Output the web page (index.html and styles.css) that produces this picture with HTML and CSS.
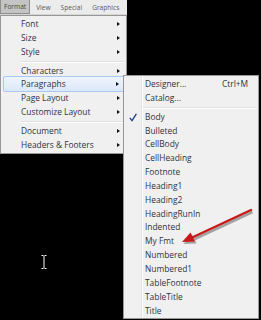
FILE: index.html
```html
<!DOCTYPE html>
<html>
<head>
<meta charset="utf-8">
<link rel="stylesheet" href="styles.css">
</head>
<body>
<div class="screen">
  <div class="menubar">
    <span class="tab tab-active">Format</span>
    <span class="tab">View</span>
    <span class="tab">Special</span>
    <span class="tab">Graphics</span>
  </div>
  <div class="menu main">
    <div class="item sub">Font</div>
    <div class="item sub">Size</div>
    <div class="item sub">Style</div>
    <div class="sep"></div>
    <div class="item sub">Characters</div>
    <div class="item sub hl">Paragraphs</div>
    <div class="item sub">Page Layout</div>
    <div class="item sub">Customize Layout</div>
    <div class="sep"></div>
    <div class="item sub">Document</div>
    <div class="item sub">Headers &amp; Footers</div>
  </div>
  <div class="menu submenu">
    <div class="item"><span>Designer...</span><span class="key">Ctrl+M</span></div>
    <div class="item">Catalog...</div>
    <div class="sep"></div>
    <div class="item checked">
      <svg class="check" width="8" height="9" viewBox="0 0 8 9"><path d="M0.8 4.8 L3 7.6 L7.4 0.8" fill="none" stroke="#1d3c8c" stroke-width="1.3"/></svg>
      Body</div>
    <div class="item">Bulleted</div>
    <div class="item">CellBody</div>
    <div class="item">CellHeading</div>
    <div class="item">Footnote</div>
    <div class="item">Heading1</div>
    <div class="item">Heading2</div>
    <div class="item">HeadingRunIn</div>
    <div class="item">Indented</div>
    <div class="item">My Fmt</div>
    <div class="item">Numbered</div>
    <div class="item">Numbered1</div>
    <div class="item">TableFootnote</div>
    <div class="item">TableTitle</div>
    <div class="item">Title</div>
  </div>
  <svg class="pointer" width="261" height="320" viewBox="0 0 261 320">
    <g transform="translate(1.5,2)" opacity="0.45">
      <line x1="251" y1="210" x2="190" y2="238.5" stroke="#444" stroke-width="2.6"/>
      <polygon points="182,242 195,241.5 190.5,232.5" fill="#444"/>
    </g>
    <line x1="251" y1="210" x2="190" y2="238.5" stroke="#c81818" stroke-width="2.4" stroke-linecap="round"/>
    <polygon points="182,242 195,241.5 190.5,232.5" fill="#c81818"/>
  </svg>
  <svg class="ibeam" width="6" height="14" viewBox="0 0 6 14">
    <path d="M0.5 0.5 H2.5 M3.5 0.5 H5.5 M3 1 V13 M0.5 13.5 H2.5 M3.5 13.5 H5.5" stroke="#fff" stroke-width="1" fill="none"/>
  </svg>
</div>
</body>
</html>
```

FILE: styles.css
```css
html, body {
  margin: 0;
  padding: 0;
  background: #000;
}
.screen {
  position: relative;
  width: 261px;
  height: 320px;
  overflow: hidden;
  background: #000;
  font-family: "Open Sans", "Liberation Sans", Arial, sans-serif;
}
.menubar {
  width: 127px;
  height: 15px;
  box-sizing: border-box;
  background: #ececec;
  border-bottom: 1px solid #d4d4d4;
  display: flex;
  align-items: stretch;
  font-size: 6.6px;
  color: #5a5a5a;
}
.tab {
  display: flex;
  align-items: center;
  padding: 0 5px 0 5px;
}
.tab-active {
  background: #c4c4c4;
  border: 1px solid #8e8e8e;
  border-top: none;
  padding: 0 3px 0 3px;
  margin-right: 1px;
  color: #444;
}
.menu {
  background: #f0f0f0;
  border: 1px solid #979797;
  box-sizing: border-box;
  font-size: 8.4px;
  color: #2e3340;
  padding: 1px 0;
}
.main {
  width: 127px;
}
.submenu {
  position: absolute;
  left: 123px;
  top: 75px;
  width: 136px;
  height: 244px;
  background: linear-gradient(to right, #f0f0f0 17px, #e2e3e3 17px, #e2e3e3 18px, #fff 18px, #fff 19px, #f0f0f0 19px);
  box-shadow: 1px 1px 1px rgba(0,0,0,0.3);
}
.item {
  position: relative;
  height: 13.85px;
  line-height: 13.85px;
  padding-left: 20px;
  white-space: nowrap;
  display: flex;
  align-items: center;
}
.submenu .item {
  padding-left: 21px;
}
.item.sub::after {
  content: "";
  position: absolute;
  right: 6px;
  top: 5px;
  border-left: 3px solid #111;
  border-top: 2px solid transparent;
  border-bottom: 2px solid transparent;
}
.hl {
  background: linear-gradient(#eef4fc, #dce8f8);
  border: 1px solid #a9c7ef;
  border-radius: 2px;
  margin: -1px 0 -1px 2px;
  padding-left: 17px;
}
.sep {
  height: 5px;
  margin-left: 20px;
  margin-right: 2px;
  background: linear-gradient(transparent 2px, #e0e0e0 2px, #e0e0e0 3px, #fff 3px, #fff 4px, transparent 4px);
}
.submenu .sep {
  margin-left: 19px;
}
.key {
  position: absolute;
  left: 98px;
}
.check {
  position: absolute;
  left: 5px;
  top: 3px;
}
.pointer {
  position: absolute;
  left: 0;
  top: 0;
}
.ibeam {
  position: absolute;
  left: 41px;
  top: 255px;
}
```
